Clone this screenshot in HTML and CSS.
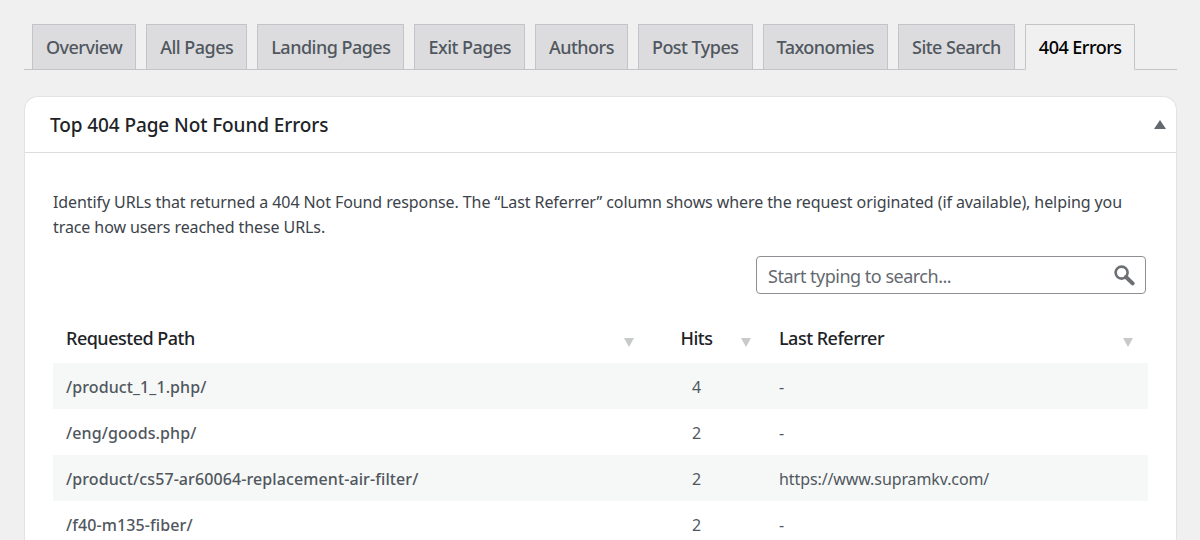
FILE: index.html
```html
<!DOCTYPE html>
<html lang="en">
	<head>
		<meta charset="utf-8" />
		<title>404 Errors</title>
		<link rel="stylesheet" href="styles.css">
	</head>
	<body>
		<div class="tabs">
			<a class="tab">Overview</a>
			<a class="tab">All Pages</a>
			<a class="tab">Landing Pages</a>
			<a class="tab">Exit Pages</a>
			<a class="tab">Authors</a>
			<a class="tab">Post Types</a>
			<a class="tab">Taxonomies</a>
			<a class="tab">Site Search</a>
			<a class="tab active">404 Errors</a>
		</div>
		<div class="card">
			<div class="card-head">
				<h2>Top 404 Page Not Found Errors</h2>
				<span class="toggle"></span>
			</div>
			<div class="card-body">
				<p class="intro">Identify URLs that returned a 404 Not Found response. The “Last Referrer” column shows where the request originated (if available), helping you trace how users reached these URLs.</p>
				<div class="search-row">
					<div class="search">
						<span class="search-text">Start typing to search...</span>
						<svg class="search-icon" width="22" height="22" viewBox="0 0 22 22">
							<circle cx="8.6" cy="8.6" r="6" fill="none" stroke="#6c7073" stroke-width="2.6"/>
							<path d="M13 13l6.6 6.4" fill="none" stroke="#6c7073" stroke-width="4" stroke-linecap="round"/>
						</svg>
					</div>
				</div>
				<table class="list">
					<thead>
						<tr>
							<th class="path">Requested Path<span class="sort"></span></th>
							<th class="hits">Hits<span class="sort"></span></th>
							<th class="ref">Last Referrer<span class="sort"></span></th>
						</tr>
					</thead>
					<tbody>
						<tr class="odd">
							<td class="path">/product_1_1.php/</td>
							<td class="hits">4</td>
							<td class="ref">-</td>
						</tr>
						<tr>
							<td class="path">/eng/goods.php/</td>
							<td class="hits">2</td>
							<td class="ref">-</td>
						</tr>
						<tr class="odd">
							<td class="path">/product/cs57-ar60064-replacement-air-filter/</td>
							<td class="hits">2</td>
							<td class="ref">https://www.supramkv.com/</td>
						</tr>
						<tr>
							<td class="path">/f40-m135-fiber/</td>
							<td class="hits">2</td>
							<td class="ref">-</td>
						</tr>
					</tbody>
				</table>
			</div>
		</div>
	</body>
</html>
```

FILE: styles.css
```css
*{margin:0px;padding:0px;box-sizing:border-box;}
html,body{
	height:540px;
	overflow:hidden;
}
body{
	background:#f0f0f1;
	font-family:"Noto Sans","Open Sans",sans-serif;
	color:#3c434a;
	padding:24px 23px 0px 24px;
}
.tabs{
	display:flex;
	height:46px;
	padding-left:8px;
	gap:10px;
	border-bottom:1px solid #c3c4c7;
}
.tab{
	height:46px;
	padding:0px 13px;
	display:flex;
	align-items:center;
	background:#dcdcde;
	border:1px solid #c3c4c7;
	color:#50575e;
	font-size:18px;
	font-weight:500;
	letter-spacing:-0.52px;
}
.tab.active{
	background:#f0f0f1;
	border-bottom:1px solid #f0f0f1;
	color:#000;
}
.card{
	margin-top:26px;
	background:#fff;
	border:1px solid #e2e3e5;
	border-bottom:none;
	border-radius:14px 14px 0px 0px;
	height:500px;
}
.card-head{
	height:56px;
	padding:0px 10px 0px 25px;
	display:flex;
	align-items:center;
	justify-content:space-between;
	border-bottom:1px solid #dcdcde;
}
.card-head h2{
	font-size:19px;
	font-weight:500;
	letter-spacing:-0.1px;
	color:#1d2327;
}
.toggle{
	width:0px;
	height:0px;
	border-left:6px solid transparent;
	border-right:6px solid transparent;
	border-bottom:9px solid #646970;
}
.card-body{
	padding:37px 28px 0px 28px;
}
.intro{
	font-size:16px;
	line-height:25px;
	letter-spacing:-0.09px;
	color:#3c434a;
}
.search-row{
	display:flex;
	justify-content:flex-end;
	margin-top:16px;
	padding-right:2px;
}
.search{
	width:390px;
	height:38px;
	padding:0px 10px 0px 11px;
	display:flex;
	align-items:center;
	justify-content:space-between;
	background:#fff;
	border:1px solid #8c8f94;
	border-radius:4px;
}
.search-text{
	padding-top:2px;
	font-size:18px;
	letter-spacing:-0.5px;
	color:#646970;
}
.list{
	width:1095px;
	margin-top:23px;
	border-collapse:collapse;
	table-layout:fixed;
}
.list th{
	position:relative;
	height:46px;
	font-size:18px;
	font-weight:500;
	letter-spacing:-0.5px;
	text-align:left;
	color:#1d2327;
	padding:0px 13px 4px 13px;
}
.list td{
	height:46px;
	font-size:16px;
	color:#50575e;
	padding:2px 13px 0px 13px;
}
.list td.path{
	font-weight:500;
	letter-spacing:0.1px;
}
.list td.ref{
	letter-spacing:-0.1px;
}
.list .path{
	width:596px;
}
.list .hits{
	width:117px;
	text-align:center;
}
.list th.hits,.list td.hits{
	padding-right:35px;
}
.list tr.odd td{
	background:#f6f7f7;
}
.sort{
	position:absolute;
	right:15px;
	top:21px;
	width:0px;
	height:0px;
	border-left:5.5px solid transparent;
	border-right:5.5px solid transparent;
	border-top:9px solid #c8c9cb;
}
```
